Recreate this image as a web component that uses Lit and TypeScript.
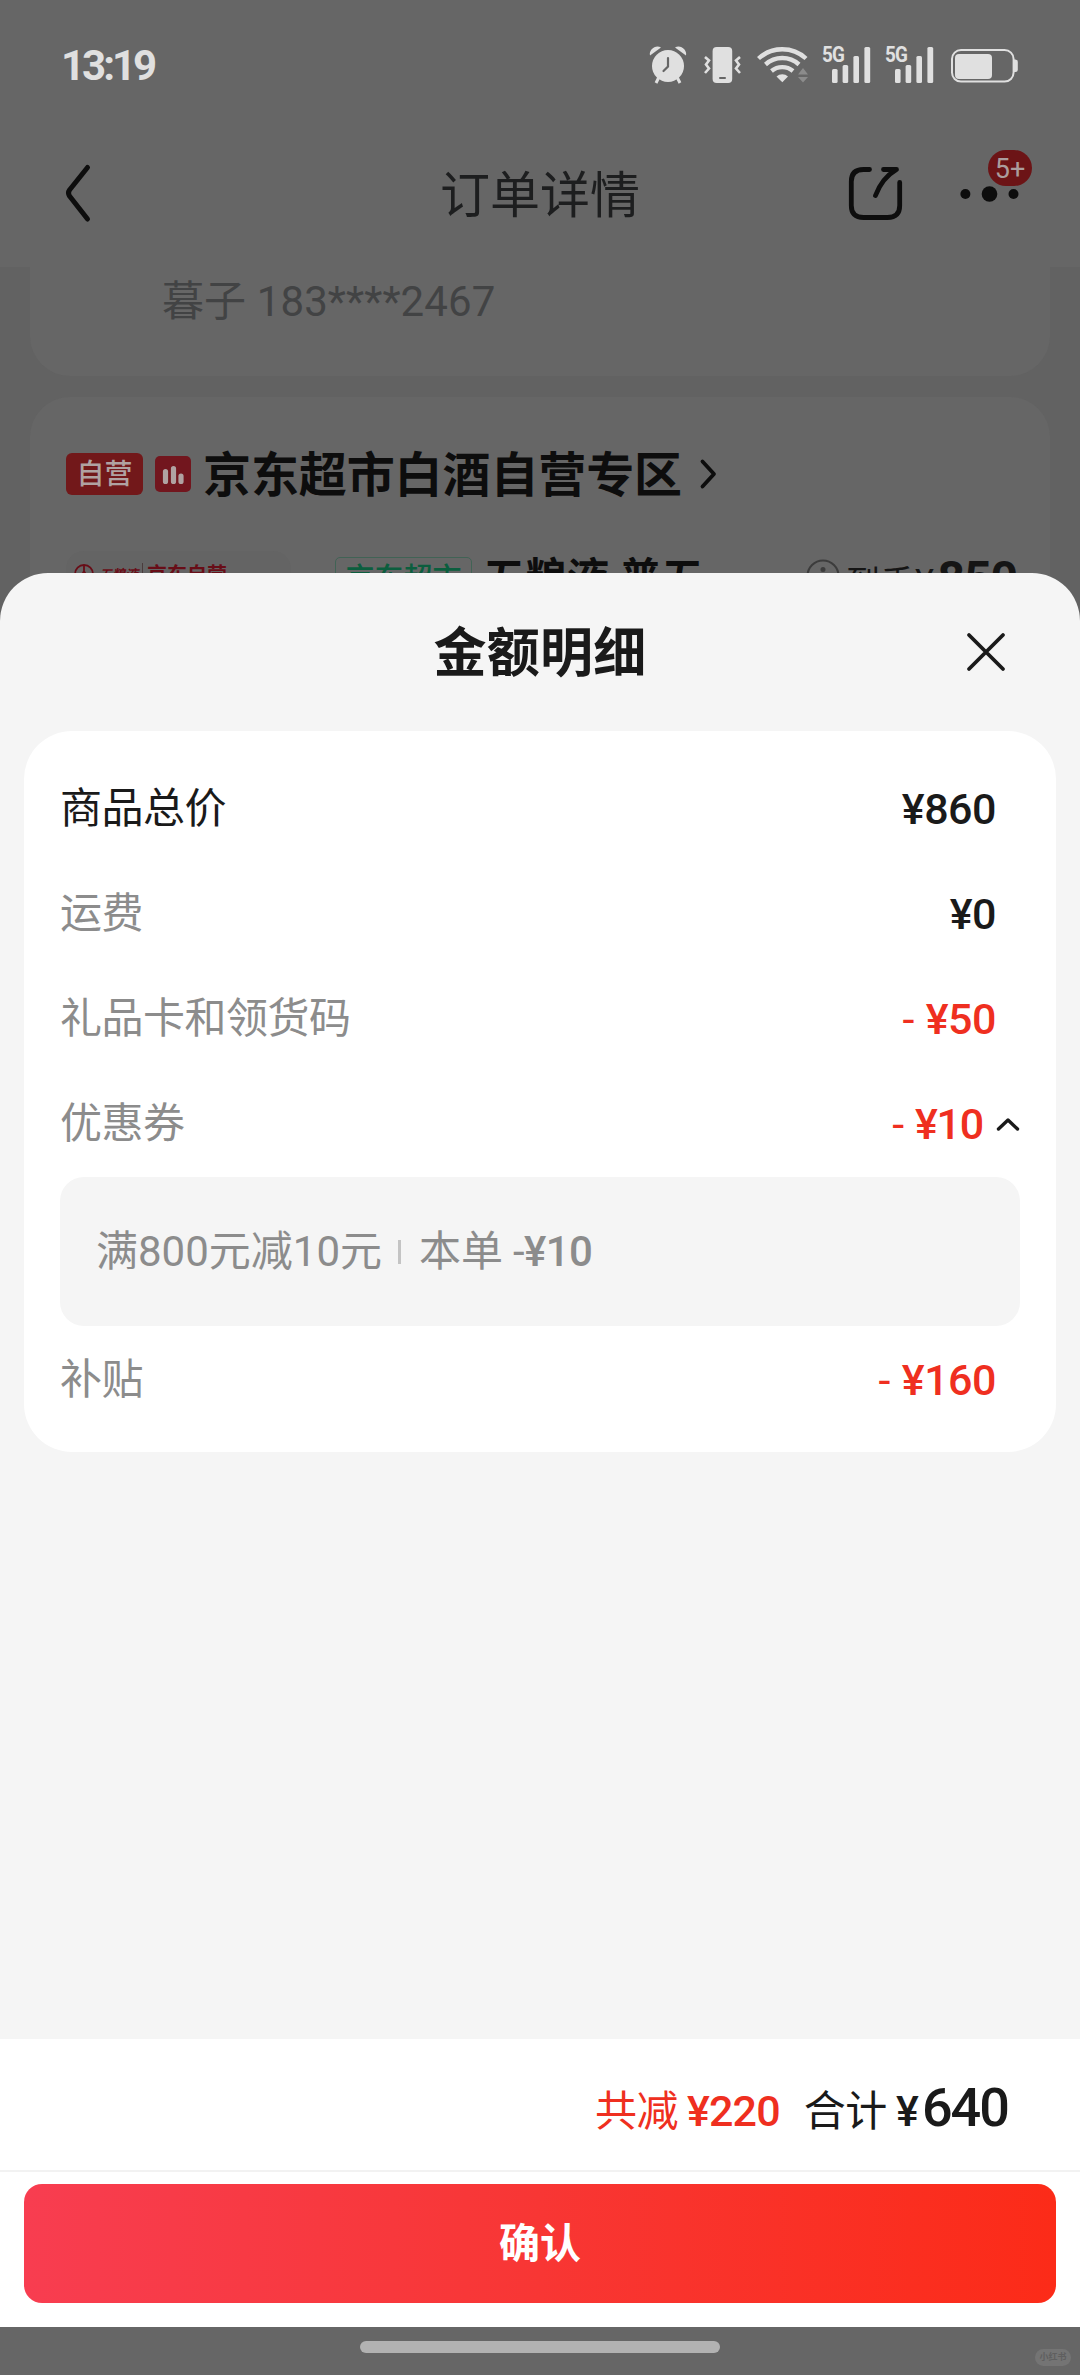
import { LitElement, html, css, nothing } from "lit";
import { customElement, property } from "lit/decorators.js";

const fonts = css`Roboto, "Noto Sans CJK SC", sans-serif`;

interface AmountRow {
  label: string;
  value: string;
  discount?: boolean;
  strong?: boolean;
  expandable?: boolean;
}

const rows: AmountRow[] = [
  { label: "商品总价", value: "¥860", strong: true },
  { label: "运费", value: "¥0" },
  { label: "礼品卡和领货码", value: "¥50", discount: true },
  { label: "优惠券", value: "¥10", discount: true, expandable: true },
  { label: "补贴", value: "¥160", discount: true },
];

@customElement("status-bar")
export class StatusBar extends LitElement {
  static styles = css`
    :host {
      display: flex;
      justify-content: space-between;
      height: 130px;
      box-sizing: border-box;
      padding: 34px 62px 0 61px;
      font-family: ${fonts};
      color: #e0e0e0;
    }
    .time {
      padding-top: 11px;
      font-size: 42px;
      line-height: 42px;
      font-weight: 700;
      letter-spacing: -3px;
    }
    .icons {
      display: flex;
      align-items: flex-end;
      height: 52px;
    }
    .net {
      font: 700 22px Roboto, sans-serif;
      letter-spacing: -1px;
    }
    svg {
      display: block;
      fill: #e0e0e0;
    }
  `;

  private signal() {
    return html`<svg width="63" height="52" viewBox="820 34 63 52">
      <text class="net" x="822" y="62" textLength="22" lengthAdjust="spacingAndGlyphs">5G</text>
      <rect x="832" y="69" width="5.6" height="14" rx="1.5"></rect>
      <rect x="842.6" y="65" width="5.6" height="18" rx="1.5"></rect>
      <rect x="853.4" y="56" width="5.6" height="27" rx="1.5"></rect>
      <rect x="864.4" y="47" width="5.8" height="36" rx="1.5"></rect>
    </svg>`;
  }

  render() {
    return html`
      <div class="time">13:19</div>
      <div class="icons">
        <svg width="50" height="42" viewBox="646 44 50 42">
          <circle cx="668" cy="66" r="16"></circle>
          <path d="M650 55.500c-1.500-6 6-11.500 11-8zM686 55.500c1.500-6-6-11.500-11-8z"></path>
          <path d="M659 77l-3 6M677 77l3 6" stroke="#e0e0e0" stroke-width="3"></path>
          <path d="M668 58v8.500l-4.500 4.500" fill="none" stroke="#666" stroke-width="2.200" stroke-linecap="round"></path>
        </svg>
        <svg width="60" height="42" viewBox="696 44 60 42">
          <rect x="712.6" y="47" width="19.600" height="36" rx="4"></rect>
          <rect x="719" y="77" width="7" height="2" rx="1" fill="#666"></rect>
          <path d="M705 57l4 3.500-3 4 3 4-4 4.500M740 57l-4 3.500 3 4-3 4 4 4.500" fill="none" stroke="#e0e0e0" stroke-width="2.600"></path>
        </svg>
        <svg width="64" height="42" viewBox="756 44 64 42">
          <path d="M758.500 58.500a35 35 0 0 1 47.500 0M765.500 64.500a25 25 0 0 1 33.500 0M771.500 71a17 17 0 0 1 21.500 0" fill="none" stroke="#e0e0e0" stroke-width="4.400"></path>
          <path d="M776.500 76.500a8.500 8.500 0 0 1 11.500 0l-5.700 5.800z"></path>
          <path d="M798 74.500l5-6.500 5 6.500zM798 77l5 5.500 5-5.500z" fill="#8c8c8c"></path>
        </svg>
        ${this.signal()}${this.signal()}
        <svg width="72" height="42" viewBox="946 44 72 42">
          <rect x="952" y="50" width="61.600" height="31.600" rx="9" fill="none" stroke="#e0e0e0" stroke-width="2"></rect>
          <rect x="955" y="54" width="37" height="25" rx="4"></rect>
          <path d="M1014 59.500h1.500q2.300 0 2.300 2.500v7.500q0 2.500-2.300 2.500h-1.500z"></path>
        </svg>
      </div>
    `;
  }
}

@customElement("order-page")
export class OrderPage extends LitElement {
  static styles = css`
    :host {
      display: block;
      height: 2375px;
      overflow: hidden;
      background: #626262;
      font-family: ${fonts};
    }
    svg {
      display: block;
      flex: none;
    }
    .top {
      background: #666;
      height: 267px;
    }
    .nav {
      display: grid;
      grid-template-columns: 1fr auto 1fr;
      align-items: center;
      height: 128px;
      padding: 0 60px;
    }
    .nav-title {
      padding-top: 4px;
      font-size: 50px;
      line-height: 60px;
      color: #1d1e1f;
    }
    .actions {
      display: flex;
      justify-content: flex-end;
      gap: 52px;
      margin-right: -12px;
    }
    .more {
      position: relative;
    }
    .badge {
      position: absolute;
      left: 30px;
      top: -14px;
      width: 44px;
      height: 36px;
      border-radius: 18px;
      background: #6c1416;
      color: #ab9d9d;
      font-size: 27px;
      line-height: 38px;
      text-align: center;
    }
    .card {
      margin: 0 30px;
      background: #666;
      box-sizing: border-box;
    }
    .address {
      height: 109px;
      padding: 10px 0 0 132px;
      border-radius: 0 0 40px 40px;
      font-size: 42px;
      line-height: 50px;
      letter-spacing: 0.1px;
      color: #424344;
    }
    .shop {
      margin-top: 21px;
      height: 1500px;
      border-radius: 40px 40px 0 0;
      padding: 46px 30px 0 36px;
    }
    .shop-head {
      display: flex;
      align-items: center;
      height: 62px;
    }
    .self {
      width: 77px;
      height: 42px;
      border-radius: 6px;
      background: #72181a;
      color: #b0a2a2;
      font-size: 28px;
      line-height: 43px;
      font-weight: 500;
      text-align: center;
      margin-right: 12px;
    }
    .shop-name {
      margin: 0 17px 0 12px;
      padding-top: 3px;
      font-size: 48px;
      line-height: 60px;
      font-weight: 700;
      color: #0d0d0d;
      letter-spacing: -0.1px;
    }
    .goods {
      display: flex;
      margin-top: 46px;
      align-items: flex-start;
    }
    .photo {
      display: flex;
      align-items: center;
      box-sizing: border-box;
      width: 225px;
      height: 225px;
      padding: 8px 0 188px 8px;
      border-radius: 18px;
      background: #646464;
      color: #680d17;
      font-size: 20px;
      font-weight: 700;
      white-space: nowrap;
    }
    .brand {
      font-family: "Noto Sans CJK SC", sans-serif;
      font-size: 13px;
      font-style: italic;
      margin: 0 4px 0 5px;
    }
    .bar {
      width: 1px;
      height: 22px;
      background: #4a3c3c;
      margin-right: 4px;
    }
    .market {
      margin: 6px 11px 0 44px;
      width: 135px;
      height: 42px;
      border: 1px solid #416355;
      border-radius: 5px;
      color: #0b5e3e;
      font-size: 29px;
      line-height: 42px;
      font-weight: 500;
      text-align: center;
      white-space: nowrap;
    }
    .goods-name {
      width: 320px;
      padding-top: 3px;
      font-size: 42px;
      line-height: 50px;
      font-weight: 700;
      color: #0d0d0d;
      white-space: nowrap;
    }
    .paid {
      display: flex;
      align-items: baseline;
      font-size: 34px;
      letter-spacing: 0.5px;
      padding-top: 1px;
      color: #151515;
      white-space: nowrap;
    }
    .yen {
      font-size: 36px;
    }
    .paid b {
      margin-left: 3px;
      font-size: 48px;
      line-height: 54px;
      letter-spacing: -1px;
    }
    .info {
      margin: 8px 6px 0 3px;
    }
  `;

  render() {
    return html`
      <div class="top">
        <status-bar></status-bar>
        <div class="nav">
          <svg width="34" height="64" viewBox="60 162 34 64" fill="none" stroke="#0d0d0d" stroke-width="5" stroke-linecap="round" stroke-linejoin="round">
            <path d="M87.500 167.500L69.500 190q-2 3 0 6L87.500 219"></path>
          </svg>
          <div class="nav-title">订单详情</div>
          <div class="actions">
            <svg width="60" height="60" viewBox="846 164 60 60" fill="none" stroke="#0d0d0d" stroke-width="4.800" stroke-linecap="round" stroke-linejoin="round">
              <path d="M869.500 169.500h-6q-12.200 0-12.200 12v24q0 12 12.200 12h24q12.200 0 12.200-12v-23"></path>
              <path d="M883.500 169.500h13q-14.500 8.500-21 26"></path>
            </svg>
            <div class="more">
              <svg width="74" height="60" viewBox="958 164 74 60" fill="#0d0d0d">
                <circle cx="965.400" cy="194" r="5"></circle>
                <circle cx="989.500" cy="194" r="7.800"></circle>
                <circle cx="1013.500" cy="194" r="5"></circle>
              </svg>
              <div class="badge">5+</div>
            </div>
          </div>
        </div>
      </div>
      <div class="card address">暮子 183****2467</div>
      <div class="card shop">
        <div class="shop-head">
          <div class="self">自营</div>
          <svg width="36" height="36" viewBox="0 0 36 36">
            <rect width="36" height="36" rx="5" fill="#72161e"></rect>
            <path d="M10.500 15.500v10M18.500 12.500v13M26 20v5.500" stroke="#b0a2a2" stroke-width="5.200" stroke-linecap="round"></path>
          </svg>
          <div class="shop-name">京东超市白酒自营专区</div>
          <svg width="20" height="34" viewBox="0 0 20 34" fill="none" stroke="#0d0d0d" stroke-width="3.800" stroke-linecap="round" stroke-linejoin="round">
            <path d="M3.500 4.500L15 17L3.500 29.500"></path>
          </svg>
        </div>
        <div class="goods">
          <div class="photo">
            <svg width="20" height="20" viewBox="0 0 20 20" fill="none" stroke="#680d17" stroke-width="1.800">
              <circle cx="10" cy="10" r="9"></circle>
              <path d="M10 2v6M4.500 17L10 7l5.500 10"></path>
            </svg>
            <span class="brand">五粮液</span><span class="bar"></span>京东自营
          </div>
          <div class="market">京东超市</div>
          <div class="goods-name">五粮液 普五</div>
          <svg class="info" width="34" height="34" viewBox="0 0 34 34" fill="none" stroke="#3c3c3c" stroke-width="2">
            <circle cx="17" cy="17" r="15.500"></circle>
            <path d="M17 15v11" stroke-width="3"></path>
            <circle cx="17" cy="10.500" r="1.500" fill="#3c3c3c"></circle>
          </svg>
          <div class="paid">到手<span class="yen">¥</span><b>850</b></div>
        </div>
      </div>
    `;
  }
}

@customElement("amount-row")
export class AmountRowElement extends LitElement {
  @property({ attribute: false }) row!: AmountRow;

  static styles = css`
    :host {
      display: flex;
      align-items: center;
      justify-content: space-between;
      height: 105px;
      padding: 0 36px;
      font-family: ${fonts};
      font-size: 42px;
      line-height: 60px;
    }
    .label {
      padding-top: 2px;
      color: #8c8c8c;
      letter-spacing: -0.5px;
    }
    .strong {
      color: #1a1a1a;
    }
    .value {
      display: flex;
      align-items: center;
      padding-right: 24px;
      padding-top: 2px;
      font-size: 43px;
      font-weight: 500;
      letter-spacing: -0.5px;
      color: #1a1a1a;
    }
    .open {
      padding-right: 0;
      letter-spacing: -1.2px;
    }
    .red {
      color: #ef2f20;
    }
    .minus {
      margin-right: 12px;
      font-weight: 400;
    }
    svg {
      display: block;
      margin-left: 13px;
    }
  `;

  render() {
    const r = this.row;
    return html`
      <span class="label ${r.strong ? "strong" : ""}">${r.label}</span>
      <span class="value ${r.discount ? "red" : ""} ${r.expandable ? "open" : ""}">
        ${r.discount ? html`<span class="minus">-</span>` : nothing}<span>${r.value}</span>
        ${r.expandable
          ? html`<svg width="24" height="16" viewBox="0 0 24 16" fill="none" stroke="#1a1a1a" stroke-width="3.400" stroke-linecap="round" stroke-linejoin="round">
              <path d="M2.500 13L12 4l9.500 9"></path>
            </svg>`
          : nothing}
      </span>
    `;
  }
}

@customElement("app-root")
export class AppRoot extends LitElement {
  static styles = css`
    :host {
      display: block;
      position: relative;
      width: 1080px;
      height: 2375px;
      overflow: hidden;
      font-family: ${fonts};
    }
    .overlay {
      position: absolute;
      inset: 0;
      display: flex;
      flex-direction: column;
      justify-content: flex-end;
    }
    .sheet {
      display: flex;
      flex-direction: column;
      height: 1754px;
      background: #f5f5f5;
      border-radius: 48px 48px 0 0;
      overflow: hidden;
    }
    .head {
      display: grid;
      grid-template-columns: 1fr auto 1fr;
      align-items: center;
      height: 158px;
      flex: none;
      padding: 0 72px;
    }
    .title {
      grid-column: 2;
      padding-top: 3px;
      font-size: 53px;
      line-height: 70px;
      font-weight: 700;
      letter-spacing: 0.3px;
      color: #1a1a1a;
    }
    .close {
      justify-self: end;
    }
    .panel {
      margin: 0 24px;
      padding: 24px 0 21px;
      background: #fff;
      border-radius: 48px;
    }
    .coupon {
      display: flex;
      align-items: center;
      height: 149px;
      margin: 2px 36px 0;
      padding: 1px 36px 0;
      box-sizing: border-box;
      border-radius: 24px;
      background: #f5f5f5;
      color: #8c8c8c;
      font-size: 42px;
      line-height: 60px;
    }
    .split {
      width: 3px;
      height: 24px;
      margin: 0 18px 0 16px;
      background: #c4c4c4;
    }
    .coupon-value {
      margin-left: 10px;
      font-weight: 500;
      letter-spacing: -0.6px;
    }
    .coupon-minus {
      font-weight: 400;
    }
    .footer {
      margin-top: auto;
      background: #fff;
      height: 288px;
      flex: none;
    }
    .totals {
      display: flex;
      justify-content: flex-end;
      align-items: baseline;
      height: 133px;
      box-sizing: border-box;
      padding: 33px 72px 0 0;
      border-bottom: 2px solid #f2f2f2;
      font-size: 42px;
      line-height: 72px;
      letter-spacing: -0.5px;
      color: #1a1a1a;
    }
    .saved {
      color: #ef2f20;
      margin-right: 24px;
    }
    .num {
      margin-left: 9px;
      font-size: 43px;
      font-weight: 500;
      letter-spacing: -0.8px;
    }
    .big {
      font-size: 54px;
      font-weight: 500;
      letter-spacing: -2px;
      margin-left: 4px;
    }
    .confirm {
      margin: 12px 24px 0;
      height: 119px;
      border-radius: 18px;
      background: linear-gradient(90deg, #f83d50, #f83634 50%, #fc2b18);
      color: #fff;
      font-size: 41px;
      line-height: 121px;
      font-weight: 700;
      text-align: center;
    }
    .system {
      display: flex;
      justify-content: center;
      position: relative;
      height: 48px;
      background: #666;
    }
    .home {
      margin-top: 14px;
      width: 360px;
      height: 12px;
      border-radius: 6px;
      background: #b2b2b2;
    }
    .mark {
      position: absolute;
      left: 1035px;
      top: 22px;
      width: 36px;
      height: 17px;
      border-radius: 9px;
      background: #747474;
      color: #5f5f5f;
      font-size: 9px;
      line-height: 16px;
      font-weight: 700;
      text-align: center;
    }
  `;

  private renderRow(row: AmountRow) {
    return html`
      <amount-row .row=${row}></amount-row>
      ${row.expandable
        ? html`<div class="coupon">
            <span>满800元减10元</span><span class="split"></span><span>本单</span
            ><span class="coupon-value"><span class="coupon-minus">-</span>¥10</span>
          </div>`
        : nothing}
    `;
  }

  render() {
    return html`
      <order-page></order-page>
      <div class="overlay">
        <div class="sheet">
          <div class="head">
            <div class="title">金额明细</div>
            <svg class="close" width="44" height="44" viewBox="0 0 44 44" stroke="#1a1a1a" stroke-width="3.800" stroke-linecap="round">
              <path d="M5 5L39 39M39 5L5 39"></path>
            </svg>
          </div>
          <div class="panel">${rows.map((row) => this.renderRow(row))}</div>
          <div class="footer">
            <div class="totals">
              <span class="saved">共减<span class="num">¥220</span></span>
              <span>合计<span class="num">¥</span><span class="big">640</span></span>
            </div>
            <div class="confirm">确认</div>
          </div>
        </div>
        <div class="system">
          <div class="home"></div>
          <div class="mark">小红书</div>
        </div>
      </div>
    `;
  }
}
